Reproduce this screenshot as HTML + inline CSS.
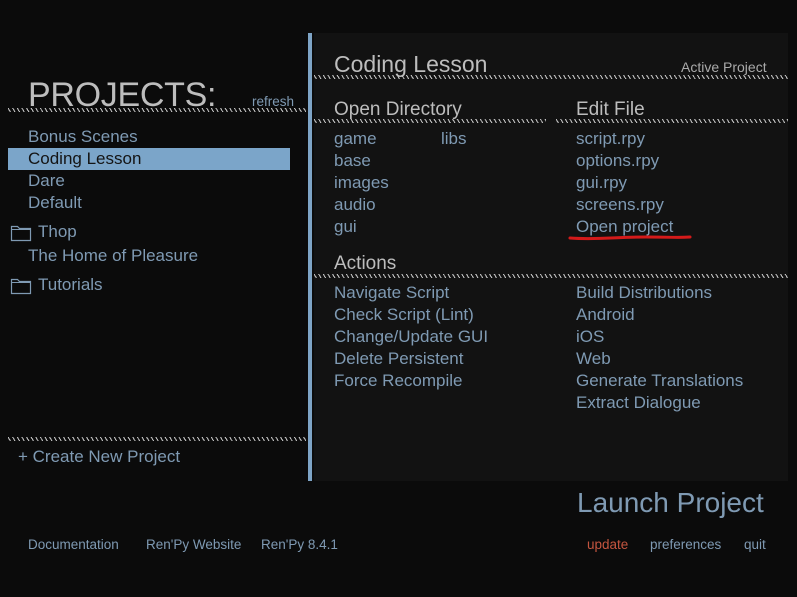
<!DOCTYPE html>
<html><head><meta charset="utf-8"><style>
*{margin:0;padding:0}
body{width:797px;height:597px;background:#0b0b0b;position:relative;overflow:hidden;font-family:"Liberation Sans",sans-serif;}
.a{position:absolute;white-space:nowrap}
.h{position:absolute;height:4px;background:repeating-linear-gradient(60deg,transparent 0 1.5px,#bdbdbd 1.5px 2.6px,transparent 2.6px 4px);}
.l{color:#7f9ab3;font-size:17px;line-height:22px}
.g{color:#bdbdbd}
.f{color:#7f9ab3;font-size:13.5px;line-height:16px}
</style></head><body>
<div class="a" style="left:314px;top:33px;width:474px;height:448px;background:#121212"></div>
<div class="a" style="left:308px;top:33px;width:4px;height:448px;background:#7ea4c6"></div>

<div class="a g" style="left:28px;top:76px;font-size:34px;line-height:38px;letter-spacing:-0.3px">PROJECTS:</div>
<div class="a f" style="left:252px;top:94px">refresh</div>
<div class="h" style="left:8px;top:108px;width:298px"></div>

<div class="a" style="left:8px;top:148px;width:282px;height:22px;background:#7ba5c9"></div>
<div class="a l" style="left:28px;top:126px">Bonus Scenes</div>
<div class="a l" style="left:28px;top:148px;color:#141414">Coding Lesson</div>
<div class="a l" style="left:28px;top:170px">Dare</div>
<div class="a l" style="left:28px;top:192px">Default</div>
<svg class="a" style="left:10px;top:224px" width="22" height="18"><path d="M1.5 2.5h6l2 2h11v12h-19z" fill="none" stroke="#7f9ab3" stroke-width="1.2"/><path d="M1.5 5.5h19" stroke="#7f9ab3" stroke-width="1"/></svg>
<div class="a l" style="left:38px;top:221px">Thop</div>
<div class="a l" style="left:28px;top:245px">The Home of Pleasure</div>
<svg class="a" style="left:10px;top:277px" width="22" height="18"><path d="M1.5 2.5h6l2 2h11v12h-19z" fill="none" stroke="#7f9ab3" stroke-width="1.2"/><path d="M1.5 5.5h19" stroke="#7f9ab3" stroke-width="1"/></svg>
<div class="a l" style="left:38px;top:274px">Tutorials</div>

<div class="h" style="left:8px;top:437px;width:298px"></div>
<div class="a l" style="left:18px;top:446px">+ Create New Project</div>

<div class="a g" style="left:334px;top:51px;font-size:23px;line-height:26px">Coding Lesson</div>
<div class="a" style="left:681px;top:59px;font-size:14px;line-height:16px;color:#aaa">Active Project</div>
<div class="h" style="left:314px;top:75px;width:474px"></div>

<div class="a g" style="left:334px;top:99px;font-size:19px;line-height:22px">Open Directory</div>
<div class="h" style="left:314px;top:119px;width:232px"></div>
<div class="a g" style="left:576px;top:99px;font-size:19px;line-height:22px">Edit File</div>
<div class="h" style="left:556px;top:119px;width:232px"></div>

<div class="a l" style="left:334px;top:128px">game</div>
<div class="a l" style="left:441px;top:128px">libs</div>
<div class="a l" style="left:334px;top:150px">base</div>
<div class="a l" style="left:334px;top:172px">images</div>
<div class="a l" style="left:334px;top:194px">audio</div>
<div class="a l" style="left:334px;top:216px">gui</div>
<div class="a l" style="left:576px;top:128px">script.rpy</div>
<div class="a l" style="left:576px;top:150px">options.rpy</div>
<div class="a l" style="left:576px;top:172px">gui.rpy</div>
<div class="a l" style="left:576px;top:194px">screens.rpy</div>
<div class="a l" style="left:576px;top:216px">Open project</div>
<svg class="a" style="left:566px;top:232px" width="130" height="12"><path d="M4 6 C30 8,50 5,80 5 S110 6,124 5" fill="none" stroke="#d41a1a" stroke-width="3" stroke-linecap="round"/></svg>

<div class="a g" style="left:334px;top:253px;font-size:19px;line-height:22px">Actions</div>
<div class="h" style="left:314px;top:274px;width:474px"></div>
<div class="a l" style="left:334px;top:282px">Navigate Script</div>
<div class="a l" style="left:334px;top:304px">Check Script (Lint)</div>
<div class="a l" style="left:334px;top:326px">Change/Update GUI</div>
<div class="a l" style="left:334px;top:348px">Delete Persistent</div>
<div class="a l" style="left:334px;top:370px">Force Recompile</div>
<div class="a l" style="left:576px;top:282px">Build Distributions</div>
<div class="a l" style="left:576px;top:304px">Android</div>
<div class="a l" style="left:576px;top:326px">iOS</div>
<div class="a l" style="left:576px;top:348px">Web</div>
<div class="a l" style="left:576px;top:370px">Generate Translations</div>
<div class="a l" style="left:576px;top:392px">Extract Dialogue</div>

<div class="a" style="left:577px;top:486px;font-size:28px;line-height:34px;color:#7f9ab3">Launch Project</div>

<div class="a f" style="left:28px;top:537px">Documentation</div>
<div class="a f" style="left:146px;top:537px">Ren'Py Website</div>
<div class="a f" style="left:261px;top:537px">Ren'Py 8.4.1</div>
<div class="a f" style="left:587px;top:537px;color:#c4553f">update</div>
<div class="a f" style="left:650px;top:537px">preferences</div>
<div class="a f" style="left:744px;top:537px">quit</div>
</body></html>
